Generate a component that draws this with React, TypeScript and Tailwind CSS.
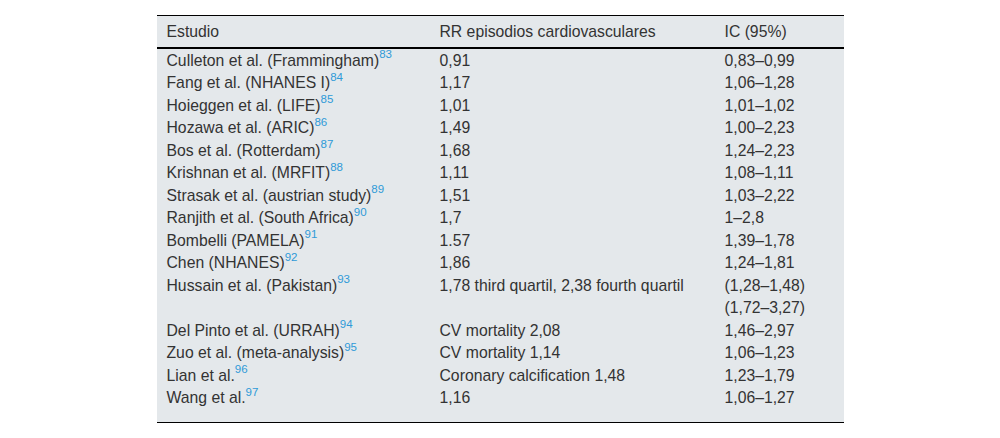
const rows: { study: string; ref: string; rr: string; ic: string[] }[] = [
  { study: 'Culleton et al. (Frammingham)', ref: '83', rr: '0,91', ic: ['0,83–0,99'] },
  { study: 'Fang et al. (NHANES I)', ref: '84', rr: '1,17', ic: ['1,06–1,28'] },
  { study: 'Hoieggen et al. (LIFE)', ref: '85', rr: '1,01', ic: ['1,01–1,02'] },
  { study: 'Hozawa et al. (ARIC)', ref: '86', rr: '1,49', ic: ['1,00–2,23'] },
  { study: 'Bos et al. (Rotterdam)', ref: '87', rr: '1,68', ic: ['1,24–2,23'] },
  { study: 'Krishnan et al. (MRFIT)', ref: '88', rr: '1,11', ic: ['1,08–1,11'] },
  { study: 'Strasak et al. (austrian study)', ref: '89', rr: '1,51', ic: ['1,03–2,22'] },
  { study: 'Ranjith et al. (South Africa)', ref: '90', rr: '1,7', ic: ['1–2,8'] },
  { study: 'Bombelli (PAMELA)', ref: '91', rr: '1.57', ic: ['1,39–1,78'] },
  { study: 'Chen (NHANES)', ref: '92', rr: '1,86', ic: ['1,24–1,81'] },
  {
    study: 'Hussain et al. (Pakistan)',
    ref: '93',
    rr: '1,78 third quartil, 2,38 fourth quartil',
    ic: ['(1,28–1,48)', '(1,72–3,27)'],
  },
  { study: 'Del Pinto et al. (URRAH)', ref: '94', rr: 'CV mortality 2,08', ic: ['1,46–2,97'] },
  { study: 'Zuo et al. (meta-analysis)', ref: '95', rr: 'CV mortality 1,14', ic: ['1,06–1,23'] },
  { study: 'Lian et al.', ref: '96', rr: 'Coronary calcification 1,48', ic: ['1,23–1,79'] },
  { study: 'Wang et al.', ref: '97', rr: '1,16', ic: ['1,06–1,27'] },
]

export default function App() {
  return (
    <div className="min-h-screen bg-white pt-[15px] font-['Liberation_Sans',Arial,sans-serif] text-[15.75px] leading-[22.5px] text-[#333]">
      <div className="mx-auto w-[687px] border-t border-b border-black bg-[#e4e8eb]">
        {/* Header */}
        <div className="grid grid-cols-[273px_285px_129px] border-b-2 border-black pt-[4.5px] pb-[3.5px]">
          <div className="px-[10px]">Estudio</div>
          <div className="px-[10px]">RR episodios cardiovasculares</div>
          <div className="px-[10px]">IC (95%)</div>
        </div>

        {/* Body */}
        <div className="pt-[1px] pb-[12px]">
          {rows.map((r) => (
            <div key={r.ref} className="grid grid-cols-[273px_285px_129px]">
              <div className="px-[10px] whitespace-nowrap">
                {r.study}
                <sup className="top-[-0.65em] text-[11.5px] text-[#2f9ad8]">{r.ref}</sup>
              </div>
              <div className="px-[10px] whitespace-nowrap">{r.rr}</div>
              <div className="px-[10px] whitespace-nowrap">
                {r.ic.map((v) => (
                  <div key={v}>{v}</div>
                ))}
              </div>
            </div>
          ))}
        </div>
      </div>
    </div>
  )
}
